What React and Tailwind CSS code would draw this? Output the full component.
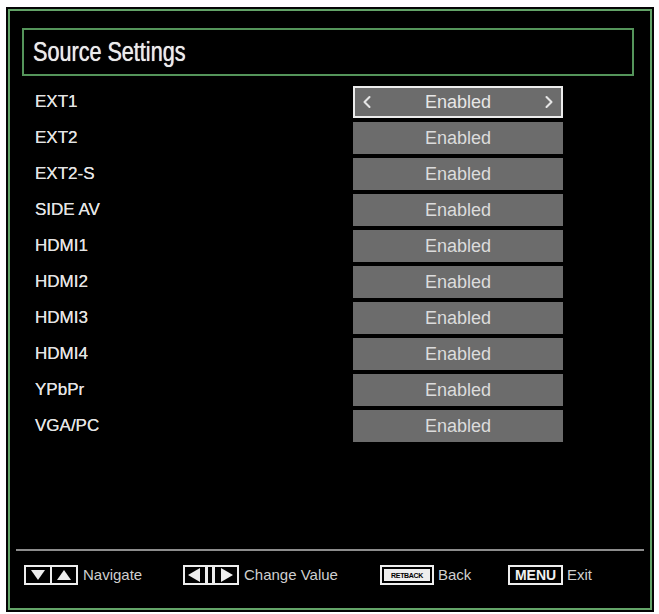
import { ChevronLeft, ChevronRight } from "lucide-react";

const sources = [
  "EXT1",
  "EXT2",
  "EXT2-S",
  "SIDE AV",
  "HDMI1",
  "HDMI2",
  "HDMI3",
  "HDMI4",
  "YPbPr",
  "VGA/PC",
];

function NavIcon() {
  return (
    <svg width="54" height="20" viewBox="0 0 54 20">
      <rect x="1" y="1" width="52" height="18" fill="#000" stroke="#eee" strokeWidth="2" />
      <line x1="27" y1="1" x2="27" y2="19" stroke="#eee" strokeWidth="2" />
      <polygon points="7,5 21,5 14,15" fill="#eee" />
      <polygon points="33,15 47,15 40,5" fill="#eee" />
    </svg>
  );
}

function ChangeIcon() {
  return (
    <svg width="56" height="20" viewBox="0 0 56 20">
      <rect x="1" y="1" width="54" height="18" fill="#000" stroke="#eee" strokeWidth="2" />
      <polygon points="5,10 17,3 17,17" fill="#eee" />
      <rect x="22" y="1" width="3" height="18" fill="#eee" />
      <rect x="29" y="1" width="3" height="18" fill="#eee" />
      <polygon points="38,3 38,17 50,10" fill="#eee" />
    </svg>
  );
}

function Row({ label, selected }) {
  return (
    <div className="flex items-center h-[32px]">
      <div className="w-[343px] pl-[25px] text-[17px] text-[#e4e4e4] [text-shadow:0_0_0.6px_#e4e4e4]">
        {label}
      </div>
      {selected ? (
        <div className="w-[210px] h-[32px] bg-[#6c6c6c] border-2 border-[#ececec] flex items-center justify-between px-[2px] text-[#e6e6e6]">
          <ChevronLeft size={20} strokeWidth={2.5} />
          <span className="text-[18px]">Enabled</span>
          <ChevronRight size={20} strokeWidth={2.5} />
        </div>
      ) : (
        <div className="w-[210px] h-[32px] bg-[#6c6c6c] flex items-center justify-center text-[18px] text-[#dcdcdc]">
          Enabled
        </div>
      )}
    </div>
  );
}

export default function App() {
  return (
    <div
      className="w-[659px] h-[614px] bg-white pt-[7px] pl-[6px]"
      style={{ fontFamily: '"Liberation Sans", Arial, sans-serif' }}
    >
      <div className="w-[648px] h-[605px] bg-[#050505] p-[2px]">
        <div className="w-full h-full border-2 border-[#63a468] bg-black flex flex-col">
          {/* header */}
          <div className="mt-[17px] ml-[12px] mr-[16px] h-[48px] border-2 border-[#54945a] flex items-center pl-[9px]">
            <span className="inline-block origin-left scale-x-[0.8] text-[27px] text-[#ebebeb] whitespace-nowrap [text-shadow:0_0_0.8px_#ebebeb]">
              Source Settings
            </span>
          </div>

          {/* source list */}
          <div className="mt-[10px] flex flex-col gap-[4px]">
            {sources.map((s, i) => (
              <Row key={s} label={s} selected={i === 0} />
            ))}
          </div>

          <div className="flex-1" />

          {/* footer */}
          <div className="mx-[6px] h-[2px] bg-[#8c8c8c]" />
          <div className="flex items-center h-[20px] mt-[14px] mb-[23px] pl-[14px] text-[15px] text-[#cfcfcf]">
            <div className="w-[159px] flex items-center gap-[5px]">
              <NavIcon />
              <span>Navigate</span>
            </div>
            <div className="w-[197px] flex items-center gap-[5px]">
              <ChangeIcon />
              <span>Change Value</span>
            </div>
            <div className="w-[128px] flex items-center gap-[4px]">
              <div className="w-[54px] h-[20px] border-2 border-[#eee] p-[2px] flex">
                <div className="flex-1 bg-[#eee] text-black text-[7px] font-bold leading-none flex items-center justify-center tracking-tighter">
                  RETBACK
                </div>
              </div>
              <span>Back</span>
            </div>
            <div className="flex items-center gap-[4px]">
              <div className="w-[55px] h-[20px] border-2 border-[#eee] flex items-center justify-center text-[14px] font-bold text-[#f0f0f0] leading-none">
                MENU
              </div>
              <span>Exit</span>
            </div>
          </div>
        </div>
      </div>
    </div>
  );
}
